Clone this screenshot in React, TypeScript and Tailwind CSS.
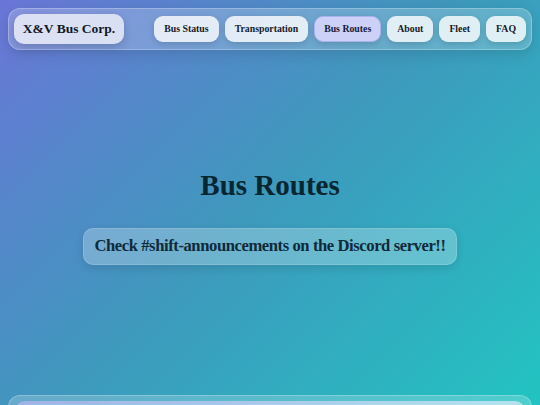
import React from "react";

const links = ["Bus Status", "Transportation", "Bus Routes", "About", "Fleet", "FAQ"];
const active = "Bus Routes";

export default function App() {
  return (
    <div
      className="min-h-screen w-full overflow-hidden bg-[linear-gradient(135deg,#6b76d8_0%,#3f98bd_45%,#1fc8c2_100%)] px-2 pt-2 text-[#0c1f2a]"
      style={{ fontFamily: '"Liberation Serif", "Times New Roman", serif' }}
    >
      <header className="flex h-[42px] items-center justify-between rounded-xl border border-white/25 bg-white/20 pl-[5px] pr-[5px] shadow-[0_4px_14px_rgba(0,0,0,0.12)]">
        <div className="flex h-[30px] w-[110px] items-center justify-center rounded-[10px] bg-[#dfe4f4]/95 text-[13.5px] font-bold text-[#111827] shadow-[0_3px_8px_rgba(0,0,0,0.18)]">
          X&amp;V Bus Corp.
        </div>
        <nav className="flex items-center gap-[6px]">
          {links.map((l) => (
            <a
              key={l}
              className={
                l === active
                  ? "flex h-[26px] items-center rounded-[9px] border border-[#a9b3ee] bg-[#cdd1f7] px-[9px] text-[9.8px] font-bold text-[#151b3a] shadow-[0_2px_6px_rgba(0,0,0,0.15)]"
                  : "flex h-[26px] items-center rounded-[9px] bg-white/80 px-[10px] text-[9.8px] font-bold text-[#151b2a] shadow-[0_2px_6px_rgba(0,0,0,0.15)]"
              }
            >
              {l}
            </a>
          ))}
        </nav>
      </header>

      <main className="flex h-[337px] flex-col items-center pt-[117px]">
        <h1 className="text-[29px] font-bold leading-[36px] text-[#082630]">Bus Routes</h1>
        <div className="mt-[25px] flex h-[37px] items-center rounded-[10px] border border-white/15 bg-white/25 px-[10px] text-[16.6px] font-bold tracking-tight text-[#0f2a3a] shadow-[0_3px_10px_rgba(0,0,0,0.12)]">
          Check #shift-announcements on the Discord server!!
        </div>
      </main>

      <footer className="mt-2 h-[60px] rounded-xl border border-white/25 bg-white/20 px-[6px] pt-[5px]">
        <div className="h-[40px] rounded-[10px] bg-[linear-gradient(90deg,#9fb2e6,#b3e3ee)]" />
      </footer>
    </div>
  );
}
